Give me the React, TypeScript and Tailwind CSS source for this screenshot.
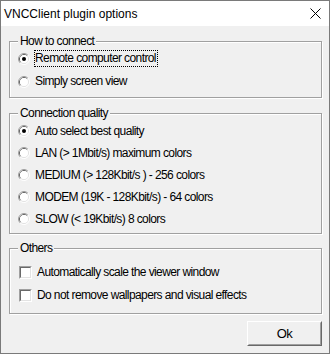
import React from 'react';

const font = { fontFamily: '"Liberation Sans", Arial, sans-serif' };

function Radio({ checked }: { checked?: boolean }) {
  return (
    <svg width="12" height="12" viewBox="0 0 12 12" className="shrink-0">
      <path d="M2.11 9.89 A5.5 5.5 0 0 1 9.89 2.11" fill="none" stroke="#a0a0a0" strokeWidth="1" />
      <path d="M9.89 2.11 A5.5 5.5 0 0 1 2.11 9.89" fill="none" stroke="#ffffff" strokeWidth="1" />
      <path d="M2.82 9.18 A4.5 4.5 0 0 1 9.18 2.82" fill="none" stroke="#696969" strokeWidth="1" />
      <path d="M9.18 2.82 A4.5 4.5 0 0 1 2.82 9.18" fill="none" stroke="#e3e3e3" strokeWidth="1" />
      <circle cx="6" cy="6" r="4" fill="#ffffff" />
      {checked && <circle cx="6" cy="6" r="2" fill="#000000" />}
    </svg>
  );
}

function Checkbox() {
  return (
    <div className="w-[13px] h-[13px] shrink-0 border border-t-[#a0a0a0] border-l-[#a0a0a0] border-b-white border-r-white">
      <div className="w-full h-full bg-white border border-t-[#696969] border-l-[#696969] border-b-[#e3e3e3] border-r-[#e3e3e3]" />
    </div>
  );
}

function RadioRow({ label, checked, focused, h }: { label: string; checked?: boolean; focused?: boolean; h: string }) {
  return (
    <div className={`flex items-center pl-[8px] gap-[4px] ${h}`}>
      <Radio checked={checked} />
      <span
        className={`border leading-[15px] pr-[1px] ${focused ? 'border-dotted border-black' : 'border-transparent'}`}
      >
        {label}
      </span>
    </div>
  );
}

function CheckRow({ label }: { label: string }) {
  return (
    <div className="flex items-center pl-[9px] gap-[5px] h-[23px]">
      <Checkbox />
      <span className="leading-[15px]">{label}</span>
    </div>
  );
}

function Group({ title, className, children }: { title: string; className: string; children: React.ReactNode }) {
  return (
    <div
      className={`relative border border-[#a0a0a0] shadow-[1px_1px_0_#ffffff,inset_1px_1px_0_#ffffff] ${className}`}
    >
      <span className="absolute left-[8px] top-[-8px] bg-[#f0f0f0] px-[2px] leading-[14px]">{title}</span>
      {children}
    </div>
  );
}

export default function App() {
  return (
    <div
      className="w-[330px] h-[354px] flex flex-col border border-[#7a7a7a] bg-[#f0f0f0] text-black text-[12px] tracking-[-0.6px]"
      style={font}
    >
      {/* Title bar */}
      <div className="h-[25px] bg-white flex items-center justify-between pl-[3px] pr-[8px] tracking-normal">
        <span className="text-[12px] leading-[16px] pt-[1px]">VNCClient plugin options</span>
        <svg width="11" height="11" viewBox="0 0 11 11">
          <path d="M0.5 0.5 L10.5 10.5 M10.5 0.5 L0.5 10.5" stroke="#000" strokeWidth="1" />
        </svg>
      </div>

      {/* Body */}
      <div className="flex-1 flex flex-col pl-[8px] pr-[7px]">
        <Group title="How to connect" className="mt-[15px] h-[57px] pt-[5px]">
          <RadioRow h="h-[23px]" label="Remote computer control" checked focused />
          <RadioRow h="h-[23px]" label="Simply screen view" />
        </Group>

        <Group title="Connection quality" className="mt-[15px] h-[121px] pt-[6px]">
          <RadioRow h="h-[22px]" label="Auto select best quality" checked />
          <RadioRow h="h-[22px]" label="LAN (> 1Mbit/s) maximum colors" />
          <RadioRow h="h-[22px]" label="MEDIUM (> 128Kbit/s ) - 256 colors" />
          <RadioRow h="h-[22px]" label="MODEM (19K - 128Kbit/s) - 64 colors" />
          <RadioRow h="h-[22px]" label="SLOW (< 19Kbit/s) 8 colors" />
        </Group>

        <Group title="Others" className="mt-[14px] h-[66px] pt-[12px]">
          <CheckRow label="Automatically scale the viewer window" />
          <CheckRow label="Do not remove wallpapers and visual effects" />
        </Group>

        <div className="flex justify-end mt-[7px]">
          <button className="w-[75px] h-[25px] border border-t-white border-l-white border-b-[#696969] border-r-[#696969] bg-[#f0f0f0]">
            <div className="w-full h-full flex items-center justify-center border border-t-[#f0f0f0] border-l-[#f0f0f0] border-b-[#a0a0a0] border-r-[#a0a0a0] leading-[15px] text-[13px]">
              Ok
            </div>
          </button>
        </div>
      </div>
    </div>
  );
}
